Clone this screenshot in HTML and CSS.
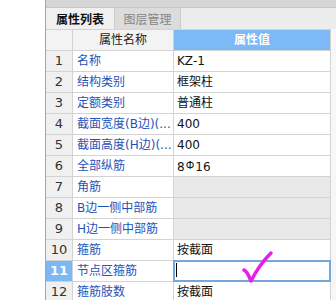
FILE: index.html
```html
<!DOCTYPE html>
<html lang="zh">
<head>
    <meta charset="UTF-8">
    <title>属性列表</title>
    <link rel="stylesheet" href="styles.css">
</head>
<body>
    <div class="page">
        <div class="side"></div>
        <div class="panel">
            <div class="topbar"></div>
            <div class="tabs">
                <div class="tab active">属性列表</div>
                <div class="tab">图层管理</div>
            </div>
            <div class="grid">
                <div class="idx head"></div>
                <div class="name head">属性名称</div>
                <div class="val head">属性值</div>

                <div class="idx">1</div>
                <div class="name">名称</div>
                <div class="val">KZ-1</div>

                <div class="idx">2</div>
                <div class="name">结构类别</div>
                <div class="val">框架柱</div>

                <div class="idx">3</div>
                <div class="name">定额类别</div>
                <div class="val">普通柱</div>

                <div class="idx">4</div>
                <div class="name">截面宽度(B边)(...</div>
                <div class="val">400</div>

                <div class="idx">5</div>
                <div class="name">截面高度(H边)(...</div>
                <div class="val">400</div>

                <div class="idx">6</div>
                <div class="name">全部纵筋</div>
                <div class="val">8<span class="bar">Ф</span>16</div>

                <div class="idx">7</div>
                <div class="name">角筋</div>
                <div class="val off"></div>

                <div class="idx">8</div>
                <div class="name">B边一侧中部筋</div>
                <div class="val off"></div>

                <div class="idx">9</div>
                <div class="name">H边一侧中部筋</div>
                <div class="val off"></div>

                <div class="idx">10</div>
                <div class="name">箍筋</div>
                <div class="val">按截面</div>

                <div class="idx sel">11</div>
                <div class="name">节点区箍筋</div>
                <div class="val edit"><span class="caret"></span></div>

                <div class="idx">12</div>
                <div class="name">箍筋肢数</div>
                <div class="val">按截面</div>
            </div>
        </div>
    </div>
    <svg class="tick" width="336" height="300" viewBox="0 0 336 300">
        <path d="M244 270 Q247 271 251 281 Q259 265 271 253" fill="none" stroke="#e61ee6" stroke-width="3.5" stroke-linecap="round" stroke-linejoin="round"/>
    </svg>
</body>
</html>
```

FILE: styles.css
```css
*{
    margin: 0;
    padding: 0;
    box-sizing: border-box;
}
body{
    width: 336px;
    height: 300px;
    overflow: hidden;
    background: #fff;
    font-family: "DejaVu Sans", "Noto Sans CJK SC", sans-serif;
    font-size: 12px;
    position: relative;
}
.page{
    display: flex;
    height: 300px;
}
.side{
    width: 45px;
    background: #fff;
}
.panel{
    flex: 1;
    border-left: 1px solid #a4a4a4;
    background: #f7f7f7;
}
.topbar{
    height: 8px;
    background: #d6d6d6;
    border-bottom: 1px solid #c6c6c6;
}
.tabs{
    height: 21px;
    display: flex;
    background: #ececec;
}
.tab{
    width: 66px;
    line-height: 21px;
    text-align: center;
    font-family: "Noto Sans CJK SC", sans-serif;
    font-size: 12px;
    color: #858585;
    background: #dcdcdc;
    border-right: 1px solid #cbcbcb;
}
.tab.active{
    width: 69px;
    color: #111;
    font-weight: bold;
    background: #f0f0f0;
}
.grid{
    width: 285px;
    display: grid;
    grid-template-columns: 26px 100px 156px;
    grid-auto-rows: 20px;
    gap: 1px;
    background: #d3d3d3;
    border-top: 1px solid #d3d3d3;
    border-right: 1px solid #d3d3d3;
}
.grid > div{
    line-height: 20px;
    white-space: nowrap;
    overflow: hidden;
}
.idx{
    background: #f0f0f0;
    color: #333;
    text-align: center;
    font-size: 13px;
}
.idx.sel{
    background: #7bb8f4;
    color: #fff;
    font-weight: bold;
}
.name{
    background: #fff;
    color: #1f52b8;
    padding-left: 4px;
}
.val{
    background: #fff;
    color: #111;
    padding-left: 3px;
}
.val.off{
    background: #e9e9e9;
}
.head{
    background: #f3f3f3;
    color: #222;
    text-align: center;
    padding-left: 0;
}
.val.head{
    background: #7cb9f6;
    color: #fff;
    font-weight: bold;
}
.bar{
    font-size: 10px;
    vertical-align: 2px;
    margin: 0 1px;
}
.val.edit{
    outline: 2px solid #77a6da;
    outline-offset: -1px;
    padding-left: 2px;
}
.caret{
    display: inline-block;
    width: 1px;
    height: 14px;
    background: #000;
    vertical-align: -2px;
}
.tick{
    position: absolute;
    left: 0;
    top: 0;
    pointer-events: none;
}
```
